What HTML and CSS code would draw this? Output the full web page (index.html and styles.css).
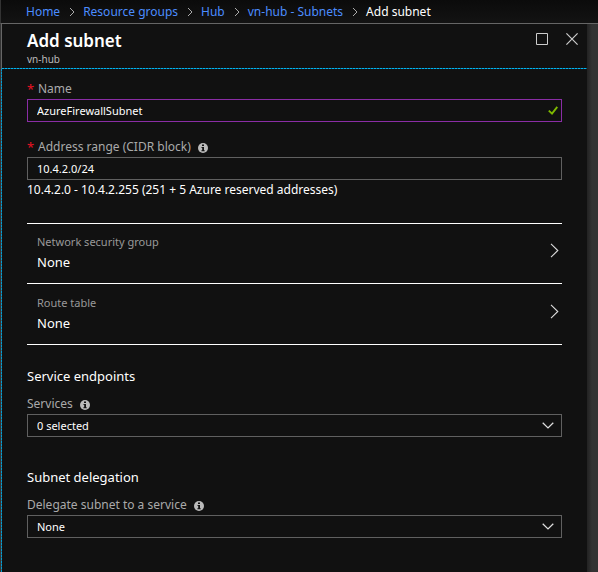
FILE: index.html
```html
<!DOCTYPE html>
<html lang="en">
<head>
<meta charset="utf-8">
<meta name="viewport" content="width=device-width, initial-scale=1">
<title>Add subnet</title>
<link rel="stylesheet" href="styles.css">
</head>
<body>
<svg class="sprite" aria-hidden="true">
  <symbol id="crumb" viewBox="0 0 6 10"><path d="M1 1l4 4-4 4" fill="none" stroke="currentColor"/></symbol>
  <symbol id="next" viewBox="0 0 9 15"><path d="M1 .8l6.8 6.7L1 14.2" fill="none" stroke="currentColor" stroke-width="1.1"/></symbol>
  <symbol id="down" viewBox="0 0 12 7"><path d="M.7.8L6 5.9 11.3.8" fill="none" stroke="currentColor" stroke-width="1.3"/></symbol>
  <symbol id="info" viewBox="0 0 10 10"><circle cx="5" cy="5" r="5" fill="currentColor"/><path d="M4 1.4h2v1.5H4zM3.5 4H6v3.3h.7v1H3.4v-1h.8V5h-.7z" fill="#111"/></symbol>
</svg>
<nav class="crumbs" aria-label="Breadcrumb">
  <a href="#">Home</a><svg class="crumb-sep"><use href="#crumb"/></svg>
  <a href="#">Resource groups</a><svg class="crumb-sep"><use href="#crumb"/></svg>
  <a href="#">Hub</a><svg class="crumb-sep"><use href="#crumb"/></svg>
  <a href="#">vn-hub - Subnets</a><svg class="crumb-sep"><use href="#crumb"/></svg>
  <span aria-current="page">Add subnet</span>
</nav>
<div class="stage">
  <main class="blade">
    <header class="blade-head">
      <div>
        <h1>Add subnet</h1>
        <p class="subtitle">vn-hub</p>
      </div>
      <div class="window-buttons">
        <button type="button" aria-label="Maximize"><svg viewBox="0 0 12 12"><path d="M.5.5h11v11H.5z" fill="none" stroke="currentColor"/></svg></button>
        <button type="button" aria-label="Close"><svg viewBox="0 0 12 12"><path d="M.4.4l11.2 11.2M11.6.4L.4 11.6" fill="none" stroke="currentColor" stroke-width="1.2"/></svg></button>
      </div>
    </header>
    <form class="blade-body">
      <div class="field">
        <label class="label" for="name"><span class="required">*</span>Name</label>
        <div class="control">
          <input class="box edited" id="name" type="text" value="AzureFirewallSubnet">
          <svg class="check" viewBox="0 0 10 9"><path d="M.8 4.6l3.2 3L9.3.9" fill="none" stroke="currentColor" stroke-width="1.9"/></svg>
        </div>
      </div>
      <div class="field">
        <label class="label" for="range"><span class="required">*</span>Address range (CIDR block)<svg class="info"><use href="#info"/></svg></label>
        <input class="box" id="range" type="text" value="10.4.2.0/24">
        <p class="hint">10.4.2.0 - 10.4.2.255 (251 + 5 Azure reserved addresses)</p>
      </div>
      <div class="pickers">
        <button class="picker" type="button">
          <span><span class="picker-name">Network security group</span><span class="picker-value">None</span></span>
          <svg class="next"><use href="#next"/></svg>
        </button>
        <button class="picker" type="button">
          <span><span class="picker-name">Route table</span><span class="picker-value">None</span></span>
          <svg class="next"><use href="#next"/></svg>
        </button>
      </div>
      <section>
        <h2>Service endpoints</h2>
        <label class="label" for="services">Services<svg class="info"><use href="#info"/></svg></label>
        <div class="control">
          <select class="box" id="services"><option>0 selected</option></select>
          <svg class="down"><use href="#down"/></svg>
        </div>
      </section>
      <section>
        <h2>Subnet delegation</h2>
        <label class="label" for="delegate">Delegate subnet to a service<svg class="info"><use href="#info"/></svg></label>
        <div class="control">
          <select class="box" id="delegate"><option>None</option></select>
          <svg class="down"><use href="#down"/></svg>
        </div>
      </section>
    </form>
  </main>
</div>
</body>
</html>
```
FILE: styles.css
```css
* { box-sizing: border-box; }

body {
  margin: 0;
  min-height: 100vh;
  display: flex;
  flex-direction: column;
  background: #111;
  color: #fff;
  font: 12px/18px "Noto Sans", "Open Sans", sans-serif;
}

h1, h2, p { margin: 0; }
button, input, select { font: inherit; color: inherit; }
svg { display: block; flex: none; }
.sprite { position: absolute; width: 0; height: 0; }

.crumbs {
  display: flex;
  align-items: center;
  height: 24px;
  padding-left: 25px;
  border-bottom: 1px solid #666;
  border-left: 1px solid #333;
  background: linear-gradient(#0b0b0b, #131313);
  white-space: nowrap;
}
.crumbs a { color: #4c8dff; text-decoration: none; }
.crumb-sep { width: 6px; height: 10px; margin: 0 8px 0 9px; color: #aaa; }

.stage {
  flex: 1;
  display: flex;
  padding: 0 11px 0 1px;
  background: linear-gradient(to left, #333 6px, #222 11px, #333 11px);
}
.blade { flex: 1; display: flex; flex-direction: column; background: #111; }

.blade-head {
  display: flex;
  justify-content: space-between;
  height: 45px;
  padding: 5px 9px 0 25px;
  border-left: 1px solid #666;
  background: repeating-linear-gradient(to right, #00b4f0 0 2px, #086080 2px 3px) bottom / 100% 1px no-repeat;
}
h1 { font-size: 17px; line-height: 24px; font-weight: 600; }
.subtitle { font-size: 10px; line-height: 12px; color: #bbb; }
.window-buttons { display: flex; gap: 18px; padding-top: 4px; height: 16px; }
.window-buttons button { padding: 0; border: 0; background: none; color: #ccc; }
.window-buttons svg { width: 12px; height: 12px; }

.blade-body {
  flex: 1;
  padding: 11px 25px 34px 26px;
  background: repeating-linear-gradient(#00a0d8 0 2px, #3c6270 2px 3px) left / 1px 100% no-repeat;
}
.field + .field { margin-top: 16px; }
.label { display: flex; align-items: center; margin-bottom: 1px; color: #aaa; }
.required { width: 11px; color: #e81123; font-size: 13px; }
.info { width: 10px; height: 10px; margin: 2px 0 0 7px; color: #bbb; }

.control { display: grid; align-items: center; }
.control > * { grid-area: 1 / 1; }
.control > svg { justify-self: end; pointer-events: none; }
.box {
  display: block;
  width: 100%;
  height: 23px;
  margin: 0;
  padding: 0 9px;
  border: 1px solid #606060;
  border-radius: 0;
  background: #111;
  color: #fff;
  font-size: 11px;
  appearance: none;
  outline: 0;
}
.edited { border-color: #8a2da5; }
.check { width: 10px; height: 9px; margin-right: 4px; color: #7fba00; }
.down { width: 12px; height: 7px; margin-right: 8px; color: #ddd; }
.hint { margin-top: 1px; }

.pickers { margin-top: 24px; border-top: 1px solid #fff; }
.picker {
  display: flex;
  align-items: center;
  justify-content: space-between;
  width: 100%;
  height: 60px;
  padding: 0 3px 4px 10px;
  border: 0;
  border-bottom: 1px solid #fff;
  background: none;
  text-align: left;
}
.picker + .picker { height: 61px; padding-top: 1px; }
.picker-name, .picker-value { display: block; line-height: 20px; }
.picker-name { font-size: 11px; color: #999; }
.picker-value { font-size: 13px; }
.next { width: 9px; height: 15px; margin-bottom: 2px; color: #ddd; }

section { padding-top: 30px; }
.pickers + section { padding-top: 21px; }
h2 { margin-bottom: 9px; font-size: 13px; line-height: 20px; font-weight: 400; }
```
